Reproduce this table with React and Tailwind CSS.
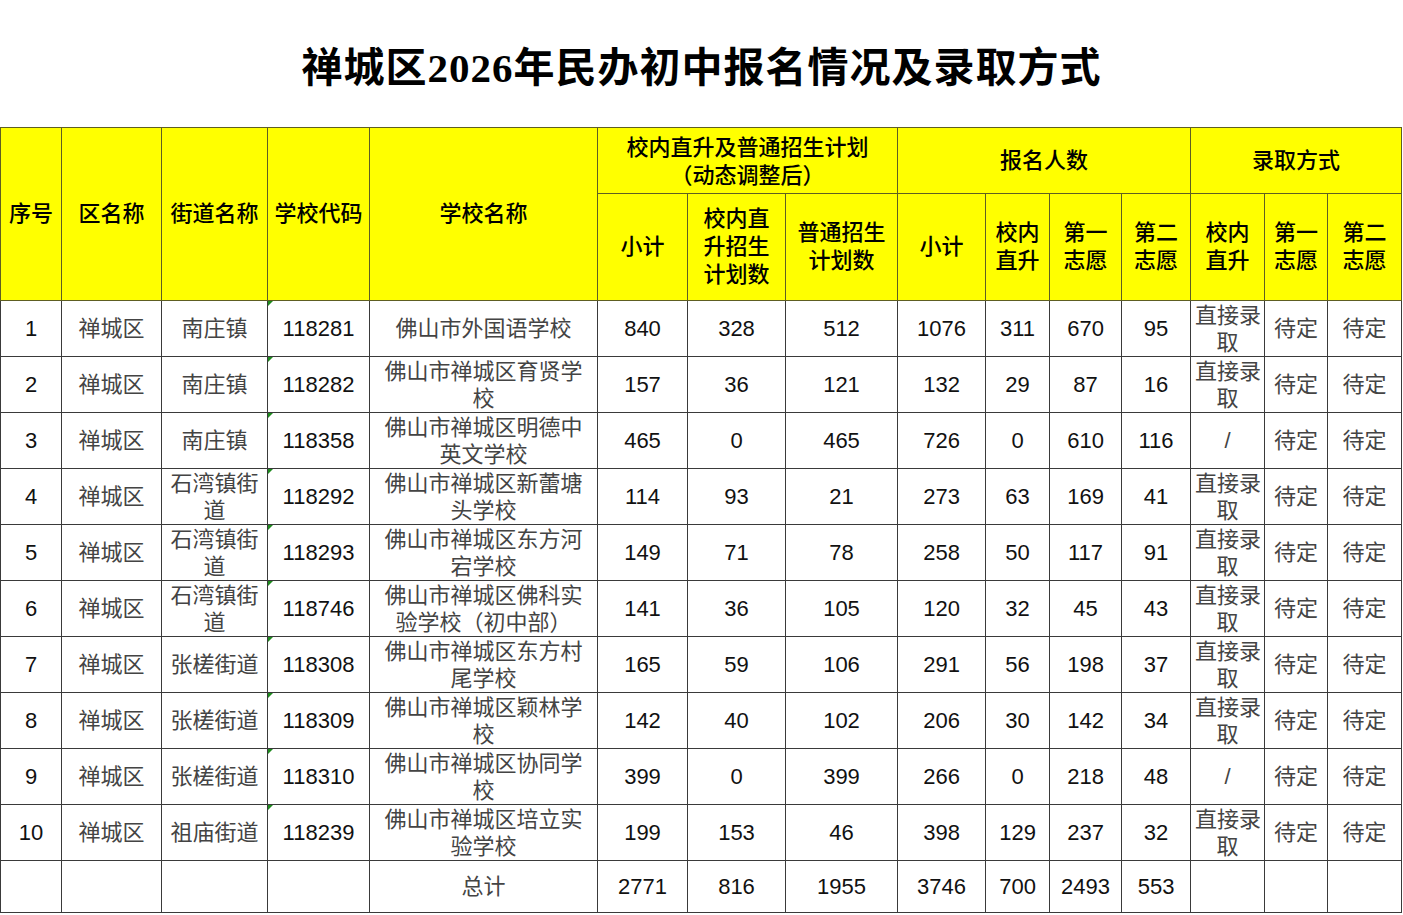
const rows = [
  ["1", "禅城区", "南庄镇", "118281", "佛山市外国语学校", "840", "328", "512", "1076", "311", "670", "95", "直接录取"],
  ["2", "禅城区", "南庄镇", "118282", "佛山市禅城区育贤学校", "157", "36", "121", "132", "29", "87", "16", "直接录取"],
  ["3", "禅城区", "南庄镇", "118358", "佛山市禅城区明德中英文学校", "465", "0", "465", "726", "0", "610", "116", "/"],
  ["4", "禅城区", "石湾镇街道", "118292", "佛山市禅城区新蕾塘头学校", "114", "93", "21", "273", "63", "169", "41", "直接录取"],
  ["5", "禅城区", "石湾镇街道", "118293", "佛山市禅城区东方河宕学校", "149", "71", "78", "258", "50", "117", "91", "直接录取"],
  ["6", "禅城区", "石湾镇街道", "118746", "佛山市禅城区佛科实验学校（初中部）", "141", "36", "105", "120", "32", "45", "43", "直接录取"],
  ["7", "禅城区", "张槎街道", "118308", "佛山市禅城区东方村尾学校", "165", "59", "106", "291", "56", "198", "37", "直接录取"],
  ["8", "禅城区", "张槎街道", "118309", "佛山市禅城区颖林学校", "142", "40", "102", "206", "30", "142", "34", "直接录取"],
  ["9", "禅城区", "张槎街道", "118310", "佛山市禅城区协同学校", "399", "0", "399", "266", "0", "218", "48", "/"],
  ["10", "禅城区", "祖庙街道", "118239", "佛山市禅城区培立实验学校", "199", "153", "46", "398", "129", "237", "32", "直接录取"],
]

const widths = [61, 100, 106, 102, 228, 90, 98, 112, 88, 64, 72, 69, 74, 63, 74]

const hd = "border border-[#5e5e22] bg-[#ffff00] text-black text-[22px] leading-[28px] font-medium text-center align-middle p-0"
const td = "border border-[#3a3a3a] text-[22px] leading-[27px] text-center align-middle px-[4px] py-0"

function Code({ value }) {
  return (
    <td className={td + " relative text-[#111]"}>
      <span className="absolute left-0 top-0 w-0 h-0 border-t-[5px] border-r-[5px] border-t-[#1e8a1e] border-r-transparent"></span>
      {value}
    </td>
  )
}

function App() {
  return (
    <div className="w-[1403px] h-[915px] bg-white overflow-hidden font-['Liberation_Sans','Noto_Sans_CJK_SC',sans-serif]">
      <div className="h-[127px] flex items-center justify-center pt-[10px]">
        <h1 className="text-[41px] font-bold text-black tracking-[1px] font-['Liberation_Serif','Noto_Sans_CJK_SC',serif]">
          禅城区2026年民办初中报名情况及录取方式
        </h1>
      </div>

      <table className="table-fixed border-collapse w-[1402px]">
        <colgroup>
          {widths.map((w, i) => (
            <col key={i} style={{ width: w }} />
          ))}
        </colgroup>
        <thead>
          <tr className="h-[66px]">
            <th rowSpan={2} className={hd}>序号</th>
            <th rowSpan={2} className={hd}>区名称</th>
            <th rowSpan={2} className={hd}>街道名称</th>
            <th rowSpan={2} className={hd}>学校代码</th>
            <th rowSpan={2} className={hd}>学校名称</th>
            <th colSpan={3} className={hd + " pt-[3px]"}>校内直升及普通招生计划<br />（动态调整后）</th>
            <th colSpan={4} className={hd}>报名人数</th>
            <th colSpan={3} className={hd}>录取方式</th>
          </tr>
          <tr className="h-[107px]">
            <th className={hd}>小计</th>
            <th className={hd}>校内直<br />升招生<br />计划数</th>
            <th className={hd}>普通招生<br />计划数</th>
            <th className={hd}>小计</th>
            <th className={hd}>校内<br />直升</th>
            <th className={hd}>第一<br />志愿</th>
            <th className={hd}>第二<br />志愿</th>
            <th className={hd}>校内<br />直升</th>
            <th className={hd}>第一<br />志愿</th>
            <th className={hd}>第二<br />志愿</th>
          </tr>
        </thead>
        <tbody>
          {rows.map((r) => (
            <tr key={r[0]} className="h-[56px]">
              <td className={td + " text-[#111]"}>{r[0]}</td>
              <td className={td + " text-[#444]"}>{r[1]}</td>
              <td className={td + " text-[#444]"}>{r[2]}</td>
              <Code value={r[3]} />
              <td className={td + " text-[#444] px-[8px]"}>{r[4]}</td>
              {r.slice(5, 12).map((n, i) => (
                <td key={i} className={td + " text-[#111]"}>{n}</td>
              ))}
              <td className={td + " text-[#444] px-0 whitespace-nowrap"}>
                {r[12] === "直接录取" ? <>直接录<br />取</> : r[12]}
              </td>
              <td className={td + " text-[#444]"}>待定</td>
              <td className={td + " text-[#444]"}>待定</td>
            </tr>
          ))}
          <tr className="h-[52px]">
            <td className={td}></td>
            <td className={td}></td>
            <td className={td}></td>
            <td className={td}></td>
            <td className={td + " text-[#444]"}>总计</td>
            {["2771", "816", "1955", "3746", "700", "2493", "553"].map((n, i) => (
              <td key={i} className={td + " text-[#111]"}>{n}</td>
            ))}
            <td className={td}></td>
            <td className={td}></td>
            <td className={td}></td>
          </tr>
        </tbody>
      </table>
    </div>
  )
}

export default App
